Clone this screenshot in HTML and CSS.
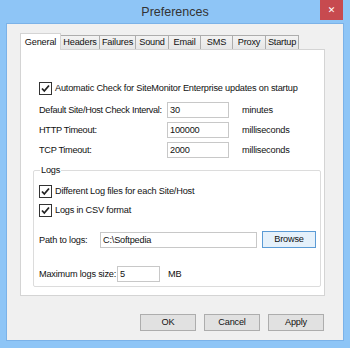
FILE: index.html
```html
<!DOCTYPE html>
<html lang="en">
<head>
    <meta charset="UTF-8">
    <title>Preferences</title>
    <link rel="stylesheet" href="styles.css">
</head>
<body>
    <div class="window">
        <div class="titlebar">
            <span></span>
            <div class="title">Preferences</div>
            <div class="close">&#x2715;</div>
        </div>
        <div class="client">
            <div class="tabs">
                <div class="tab active" style="width: 41px">General</div>
                <div class="tab" style="width: 40px">Headers</div>
                <div class="tab" style="width: 37px">Failures</div>
                <div class="tab" style="width: 34px">Sound</div>
                <div class="tab" style="width: 33px">Email</div>
                <div class="tab" style="width: 33px">SMS</div>
                <div class="tab" style="width: 34px">Proxy</div>
                <div class="tab" style="width: 34px">Startup</div>
            </div>
            <div class="panel">
                <div class="check-row top">
                    <span class="box"><svg width="13" height="13" viewBox="0 0 13 13"><polyline points="3,6.5 5.3,9 10,3.5" fill="none" stroke="#222" stroke-width="1.8"/></svg></span>
                    <span>Automatic Check for SiteMonitor Enterprise updates on startup</span>
                </div>
                <div class="field-row">
                    <label class="field-label">Default Site/Host Check Interval:</label>
                    <div class="input">30</div>
                    <span class="unit">minutes</span>
                </div>
                <div class="field-row">
                    <label class="field-label">HTTP Timeout:</label>
                    <div class="input">100000</div>
                    <span class="unit">milliseconds</span>
                </div>
                <div class="field-row">
                    <label class="field-label">TCP Timeout:</label>
                    <div class="input">2000</div>
                    <span class="unit">milliseconds</span>
                </div>

                <fieldset class="group">
                    <legend>Logs</legend>
                    <div class="check-row first">
                        <span class="box"><svg width="13" height="13" viewBox="0 0 13 13"><polyline points="3,6.5 5.3,9 10,3.5" fill="none" stroke="#222" stroke-width="1.8"/></svg></span>
                        <span>Different Log files for each Site/Host</span>
                    </div>
                    <div class="check-row second">
                        <span class="box"><svg width="13" height="13" viewBox="0 0 13 13"><polyline points="3,6.5 5.3,9 10,3.5" fill="none" stroke="#222" stroke-width="1.8"/></svg></span>
                        <span>Logs in CSV format</span>
                    </div>
                    <div class="path-row">
                        <label class="path-label">Path to logs:</label>
                        <div class="input path">C:\Softpedia</div>
                        <div class="button browse">Browse</div>
                    </div>
                    <div class="size-row">
                        <label class="size-label">Maximum logs size:</label>
                        <div class="input size">5</div>
                        <span class="unit mb">MB</span>
                    </div>
                </fieldset>
            </div>
            <div class="buttons">
                <div class="button">OK</div>
                <div class="button">Cancel</div>
                <div class="button">Apply</div>
            </div>
        </div>
    </div>
</body>
</html>
```

FILE: styles.css
```css
body {
    margin: 0;
    font-family: "Liberation Sans", Arial, sans-serif;
    font-size: 9.2px;
    letter-spacing: -0.2px;
    color: #111;
    background: #8ec5f6;
}
.window {
    width: 350px;
    height: 348px;
    display: flex;
    flex-direction: column;
    background: #8ec5f6;
}
.titlebar {
    height: 23px;
    display: grid;
    grid-template-columns: 1fr auto 1fr;
    align-items: start;
    letter-spacing: 0;
}
.title {
    font-family: "Liberation Sans", Arial, sans-serif;
    font-size: 12.5px;
    color: #333;
    line-height: 24px;
}
.close {
    justify-self: end;
    margin-right: 7px;
    width: 23px;
    height: 20px;
    background: #c74a4f;
    color: #fff;
    font-family: "DejaVu Sans", sans-serif;
    font-size: 9px;
    font-weight: bold;
    text-align: center;
    line-height: 20px;
}
.client {
    flex: 1;
    margin: 0 6px 7px 6px;
    border: 1px solid #7bb2e8;
    background: #f0f0f0;
    padding: 9px 17px 0 13px;
}
.tabs {
    display: flex;
    align-items: flex-end;
    height: 16px;
    position: relative;
    z-index: 1;
}
.tab {
    box-sizing: border-box;
    height: 14px;
    margin-right: -1px;
    border: 1px solid #adadad;
    border-bottom: none;
    background: linear-gradient(#f3f3f3, #e6e6e6);
    text-align: center;
    line-height: 13px;
    white-space: nowrap;
}
.tab.active {
    height: 17px;
    margin-bottom: -1px;
    background: #fff;
    border-color: #d4d4d4;
    line-height: 16px;
    position: relative;
    z-index: 2;
}
.panel {
    box-sizing: border-box;
    width: 305px;
    height: 247px;
    background: #fff;
    border: 1px solid #d4d4d4;
    padding: 31px 0 0 12px;
}
.check-row {
    display: flex;
    align-items: center;
    height: 14px;
    white-space: nowrap;
}
.check-row.top {
    margin-left: 6px;
}
.box {
    box-sizing: border-box;
    width: 13px;
    height: 13px;
    border: 1px solid #333;
    background: #fff;
    margin-right: 3px;
    display: flex;
}
.box svg {
    margin: -1px;
}
.field-row {
    display: flex;
    align-items: center;
    height: 20px;
    margin-left: 6px;
    white-space: nowrap;
}
.check-row.top + .field-row {
    margin-top: 5px;
}
.field-label {
    width: 128px;
    letter-spacing: -0.3px;
}
.input {
    box-sizing: border-box;
    width: 62px;
    height: 16px;
    border: 1px solid #c8c8c8;
    background: #fff;
    padding-left: 2px;
    line-height: 14px;
    white-space: nowrap;
}
.unit {
    margin-left: 13px;
}
.group {
    margin: 4px 0 0 0;
    padding: 0 0 0 5px;
    width: 288px;
    height: 123px;
    box-sizing: border-box;
    border: 1px solid #dcdcdc;
    border-radius: 2px;
    white-space: nowrap;
}
.group legend {
    padding: 0 1px;
    margin-left: 1px;
    line-height: 13px;
}
.check-row.first {
    margin-top: 7px;
}
.check-row.second {
    margin-top: 5px;
}
.path-row {
    display: flex;
    align-items: center;
    margin-top: 14px;
}
.path-label {
    width: 61px;
}
.input.path {
    width: 157px;
}
.button {
    box-sizing: border-box;
    width: 56px;
    height: 17px;
    border: 1px solid #adadad;
    background: #e1e1e1;
    text-align: center;
    line-height: 15px;
}
.button.browse {
    margin-left: 5px;
    width: 54px;
    border-color: #5b9bd5;
    background: #e5f1fb;
}
.size-row {
    display: flex;
    align-items: center;
    margin-top: 18px;
}
.size-label {
    width: 78px;
}
.input.size {
    width: 43px;
}
.unit.mb {
    margin-left: 8px;
}
.buttons {
    display: flex;
    justify-content: flex-end;
    gap: 8px;
    margin-top: 18px;
    margin-right: 2px;
}
```
